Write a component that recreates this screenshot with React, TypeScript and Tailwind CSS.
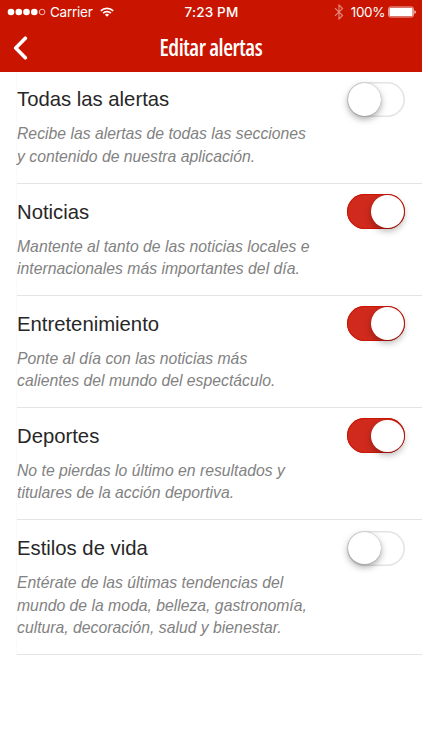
import clsx from 'clsx';

interface Alert {
  title: string;
  lines: string[];
  enabled: boolean;
}

const alerts: Alert[] = [
  {
    title: 'Todas las alertas',
    lines: ['Recibe las alertas de todas las secciones', 'y contenido de nuestra aplicación.'],
    enabled: false,
  },
  {
    title: 'Noticias',
    lines: ['Mantente al tanto de las noticias locales e', 'internacionales más importantes del día.'],
    enabled: true,
  },
  {
    title: 'Entretenimiento',
    lines: ['Ponte al día con las noticias más', 'calientes del mundo del espectáculo.'],
    enabled: true,
  },
  {
    title: 'Deportes',
    lines: ['No te pierdas lo último en resultados y', 'titulares de la acción deportiva.'],
    enabled: true,
  },
  {
    title: 'Estilos de vida',
    lines: [
      'Entérate de las últimas tendencias del',
      'mundo de la moda, belleza, gastronomía,',
      'cultura, decoración, salud y bienestar.',
    ],
    enabled: false,
  },
];

function StatusBar() {
  return (
    <div className="grid h-6 grid-cols-[1fr_auto_1fr] items-center pr-[6px] pl-[7px] font-[Inter,sans-serif] text-[13.5px]">
      <div className="flex items-center">
        <svg viewBox="0 0 39 8" className="h-2 w-[39px]" fill="white">
          <circle cx="4" cy="4" r="3.3" />
          <circle cx="11.8" cy="4" r="3.3" />
          <circle cx="19.5" cy="4" r="3.3" />
          <circle cx="27.3" cy="4" r="3.3" />
          <circle cx="35.1" cy="4" r="2.8" fill="none" stroke="white" strokeWidth="0.7" />
        </svg>
        <span className="ml-1 tracking-[-0.25px]">Carrier</span>
        <svg viewBox="0 0 14 10" className="ml-[7px] h-[10px] w-[14px]" fill="none" stroke="white" strokeWidth="1.7">
          <path d="M0.8 3.9a8.8 8.8 0 0 1 12.4 0" />
          <path d="M3.1 6.2a5.5 5.5 0 0 1 7.8 0" />
          <path d="M7 9.8 4.9 7.7a3 3 0 0 1 4.2 0z" fill="white" stroke="none" />
        </svg>
      </div>
      <span className="text-[13.5px] font-medium tracking-[0.15px]">7:23 PM</span>
      <div className="flex items-center justify-end">
        <svg
          viewBox="0 0 10 16"
          className="mr-[7px] h-4 w-[10px] opacity-50"
          fill="none"
          stroke="white"
          strokeWidth="1.1"
        >
          <path d="M1 4.2 8.6 11.5 5 15V1l3.6 3.5L1 11.8" />
        </svg>
        <span className="tracking-[-0.4px]">100%</span>
        <svg viewBox="0 0 28 12" className="ml-[3px] h-3 w-7">
          <rect x="0.5" y="0.9" width="25" height="10.2" rx="2" fill="none" stroke="white" strokeOpacity="0.7" strokeWidth="0.8" />
          <rect x="1.4" y="1.8" width="23.2" height="8.4" rx="1.2" fill="white" />
          <path d="M26.5 4.2a1.9 1.9 0 0 1 0 3.6z" fill="white" />
        </svg>
      </div>
    </div>
  );
}

function Toggle({ enabled, label }: { enabled: boolean; label: string }) {
  return (
    <button
      type="button"
      role="switch"
      aria-checked={enabled}
      aria-label={label}
      className={clsx(
        'mt-[0.4px] flex h-[35px] w-[58px] shrink-0 items-center rounded-full',
        enabled
          ? 'justify-end bg-[#d02a1d] pr-[1.5px] ring-1 ring-[#c91608] ring-inset'
          : 'bg-white pl-px ring-[1.6px] ring-[#e4e4e4] ring-inset',
      )}
    >
      <span
        className={clsx(
          'size-[32.5px] rounded-full bg-white',
          enabled
            ? 'shadow-[0_3px_7px_rgba(0,0,0,0.3)]'
            : 'shadow-[0_3px_7px_rgba(0,0,0,0.35),0_0_1px_rgba(0,0,0,0.4)]',
        )}
      />
    </button>
  );
}

function AlertRow({ alert }: { alert: Alert }) {
  return (
    <li className="flex justify-between border-b border-[#e4e4e4] pt-[9.9px] pr-[17px] pb-[14.3px]">
      <div>
        <h2 className="mb-[8px] pt-[3px] text-[20.3px] leading-[31px] text-[#272727]">{alert.title}</h2>
        <p className="text-[15.75px] leading-[22.5px] whitespace-nowrap text-[#828282] italic">
          {alert.lines.map((line) => (
            <span key={line} className="block">
              {line}
            </span>
          ))}
        </p>
      </div>
      <Toggle enabled={alert.enabled} label={alert.title} />
    </li>
  );
}

export default function App() {
  return (
    <div className="h-[750px] w-[422px] overflow-hidden bg-white font-['Liberation_Sans',Arial,sans-serif]">
      <header className="h-[71.5px] bg-[#c91400] text-white">
        <StatusBar />
        <div className="grid h-12 grid-cols-[1fr_auto_1fr] items-center px-3">
          <button type="button" aria-label="Atrás">
            <svg
              viewBox="0 0 16 24"
              className="h-6 w-4"
              fill="none"
              stroke="white"
              strokeWidth="3.6"
              strokeLinecap="round"
              strokeLinejoin="round"
            >
              <path d="M13.3 2.2 3.7 12l9.6 9.8" />
            </svg>
          </button>
          <h1 className="w-[103px] pt-px font-['Open_Sans',sans-serif] text-[22.5px] leading-none font-semibold tracking-[-0.45px] whitespace-nowrap [font-stretch:75%]">
            Editar alertas
          </h1>
        </div>
      </header>
      <ul className="ml-4 border-l border-[#fafafa]">
        {alerts.map((alert) => (
          <AlertRow key={alert.title} alert={alert} />
        ))}
      </ul>
    </div>
  );
}
